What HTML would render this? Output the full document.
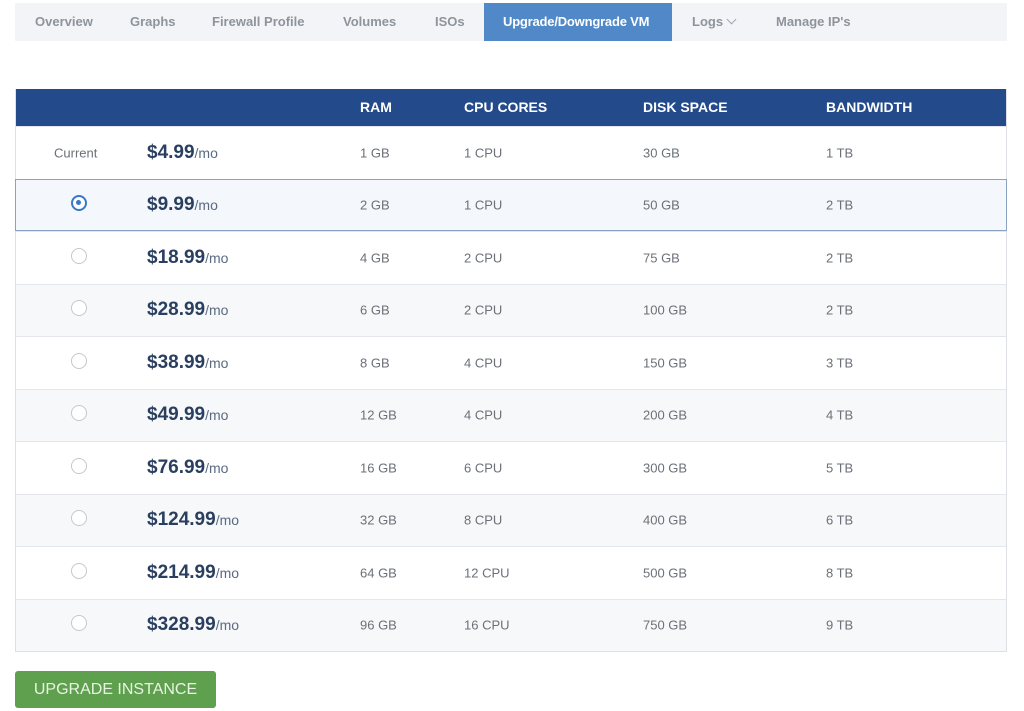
<!DOCTYPE html>
<html><head><style>
*{margin:0;padding:0;box-sizing:border-box}
body{width:1024px;height:711px;background:#fff;font-family:"Liberation Sans",sans-serif;position:relative;overflow:hidden}
.tabs{position:absolute;left:15px;top:3px;width:992px;height:38px;background:#f2f4f7}
.tab{position:absolute;top:0;height:38px;line-height:37px;font-size:13px;font-weight:bold;color:#8e949c;white-space:nowrap}
.tab.act{background:#5088c8;color:#fff;padding:0 0 0 19px;width:188px;letter-spacing:-0.2px}
.chev{display:inline-block;width:7px;height:7px;border-right:1px solid #a0a6ad;border-bottom:1px solid #a0a6ad;transform:rotate(45deg);margin-left:5px;position:relative;top:-3px}
.tbl{position:absolute;left:15px;top:89px;width:992px;border:1px solid #dde1e6;border-top:none}
.hd{height:37px;background:#234a8a;color:#fff;font-weight:bold;font-size:14px;position:relative}
.row{height:52.5px;position:relative;border-top:1px solid #e3e6ea;font-size:13px;color:#6b7078}
.row.g{background:#f7f8fa}
.row.sel{background:#f4f7fb;border:1px solid #8aa2c0;margin:0 -1px}
.c{position:absolute;top:50%;transform:translateY(-50%)}
.hd .c{top:18px}
.pr{font-size:19px;font-weight:bold;color:#2a3f5f}
.pr span{font-size:14px;font-weight:normal;color:#5a6a80}
.rad{width:16px;height:16px;border-radius:50%;border:1.5px solid #c4c8cd;background:#fff;left:55px;top:calc(50% - 2px)}
.rad.on{border:2.5px solid #3a78c4}
.rad.on::after{content:"";position:absolute;left:3px;top:3px;width:5px;height:5px;border-radius:50%;background:#3a78c4}
.btn{position:absolute;left:15px;top:671px;width:201px;height:37px;background:#5fa04e;border-radius:3px;color:#e8f3e2;font-size:16px;line-height:37px;text-align:center}
</style></head><body>
<div class="tabs">
<div class="tab" style="left:20px">Overview</div>
<div class="tab" style="left:115px">Graphs</div>
<div class="tab" style="left:197px">Firewall Profile</div>
<div class="tab" style="left:328px">Volumes</div>
<div class="tab" style="left:420px">ISOs</div>
<div class="tab act" style="left:469px">Upgrade/Downgrade VM</div>
<div class="tab" style="left:677px">Logs<span class="chev"></span></div>
<div class="tab" style="left:761px">Manage IP's</div>
</div>
<div class="tbl">
<div class="hd"><div class="c" style="left:344px">RAM</div><div class="c" style="left:448px">CPU CORES</div><div class="c" style="left:627px">DISK SPACE</div><div class="c" style="left:810px">BANDWIDTH</div></div>
<div class="row"><div class="c" style="left:38px">Current</div><div class="c pr" style="left:131px">$4.99<span>/mo</span></div><div class="c" style="left:344px">1 GB</div><div class="c" style="left:448px">1 CPU</div><div class="c" style="left:627px">30 GB</div><div class="c" style="left:810px">1 TB</div></div>
<div class="row sel"><div class="c rad on" style="left:55px"></div><div class="c pr" style="left:131px">$9.99<span>/mo</span></div><div class="c" style="left:344px">2 GB</div><div class="c" style="left:448px">1 CPU</div><div class="c" style="left:627px">50 GB</div><div class="c" style="left:810px">2 TB</div></div>
<div class="row"><div class="c rad"></div><div class="c pr" style="left:131px">$18.99<span>/mo</span></div><div class="c" style="left:344px">4 GB</div><div class="c" style="left:448px">2 CPU</div><div class="c" style="left:627px">75 GB</div><div class="c" style="left:810px">2 TB</div></div>
<div class="row g"><div class="c rad"></div><div class="c pr" style="left:131px">$28.99<span>/mo</span></div><div class="c" style="left:344px">6 GB</div><div class="c" style="left:448px">2 CPU</div><div class="c" style="left:627px">100 GB</div><div class="c" style="left:810px">2 TB</div></div>
<div class="row"><div class="c rad"></div><div class="c pr" style="left:131px">$38.99<span>/mo</span></div><div class="c" style="left:344px">8 GB</div><div class="c" style="left:448px">4 CPU</div><div class="c" style="left:627px">150 GB</div><div class="c" style="left:810px">3 TB</div></div>
<div class="row g"><div class="c rad"></div><div class="c pr" style="left:131px">$49.99<span>/mo</span></div><div class="c" style="left:344px">12 GB</div><div class="c" style="left:448px">4 CPU</div><div class="c" style="left:627px">200 GB</div><div class="c" style="left:810px">4 TB</div></div>
<div class="row"><div class="c rad"></div><div class="c pr" style="left:131px">$76.99<span>/mo</span></div><div class="c" style="left:344px">16 GB</div><div class="c" style="left:448px">6 CPU</div><div class="c" style="left:627px">300 GB</div><div class="c" style="left:810px">5 TB</div></div>
<div class="row g"><div class="c rad"></div><div class="c pr" style="left:131px">$124.99<span>/mo</span></div><div class="c" style="left:344px">32 GB</div><div class="c" style="left:448px">8 CPU</div><div class="c" style="left:627px">400 GB</div><div class="c" style="left:810px">6 TB</div></div>
<div class="row"><div class="c rad"></div><div class="c pr" style="left:131px">$214.99<span>/mo</span></div><div class="c" style="left:344px">64 GB</div><div class="c" style="left:448px">12 CPU</div><div class="c" style="left:627px">500 GB</div><div class="c" style="left:810px">8 TB</div></div>
<div class="row g"><div class="c rad"></div><div class="c pr" style="left:131px">$328.99<span>/mo</span></div><div class="c" style="left:344px">96 GB</div><div class="c" style="left:448px">16 CPU</div><div class="c" style="left:627px">750 GB</div><div class="c" style="left:810px">9 TB</div></div>
</div>
<div class="btn">UPGRADE INSTANCE</div>
</body></html>
